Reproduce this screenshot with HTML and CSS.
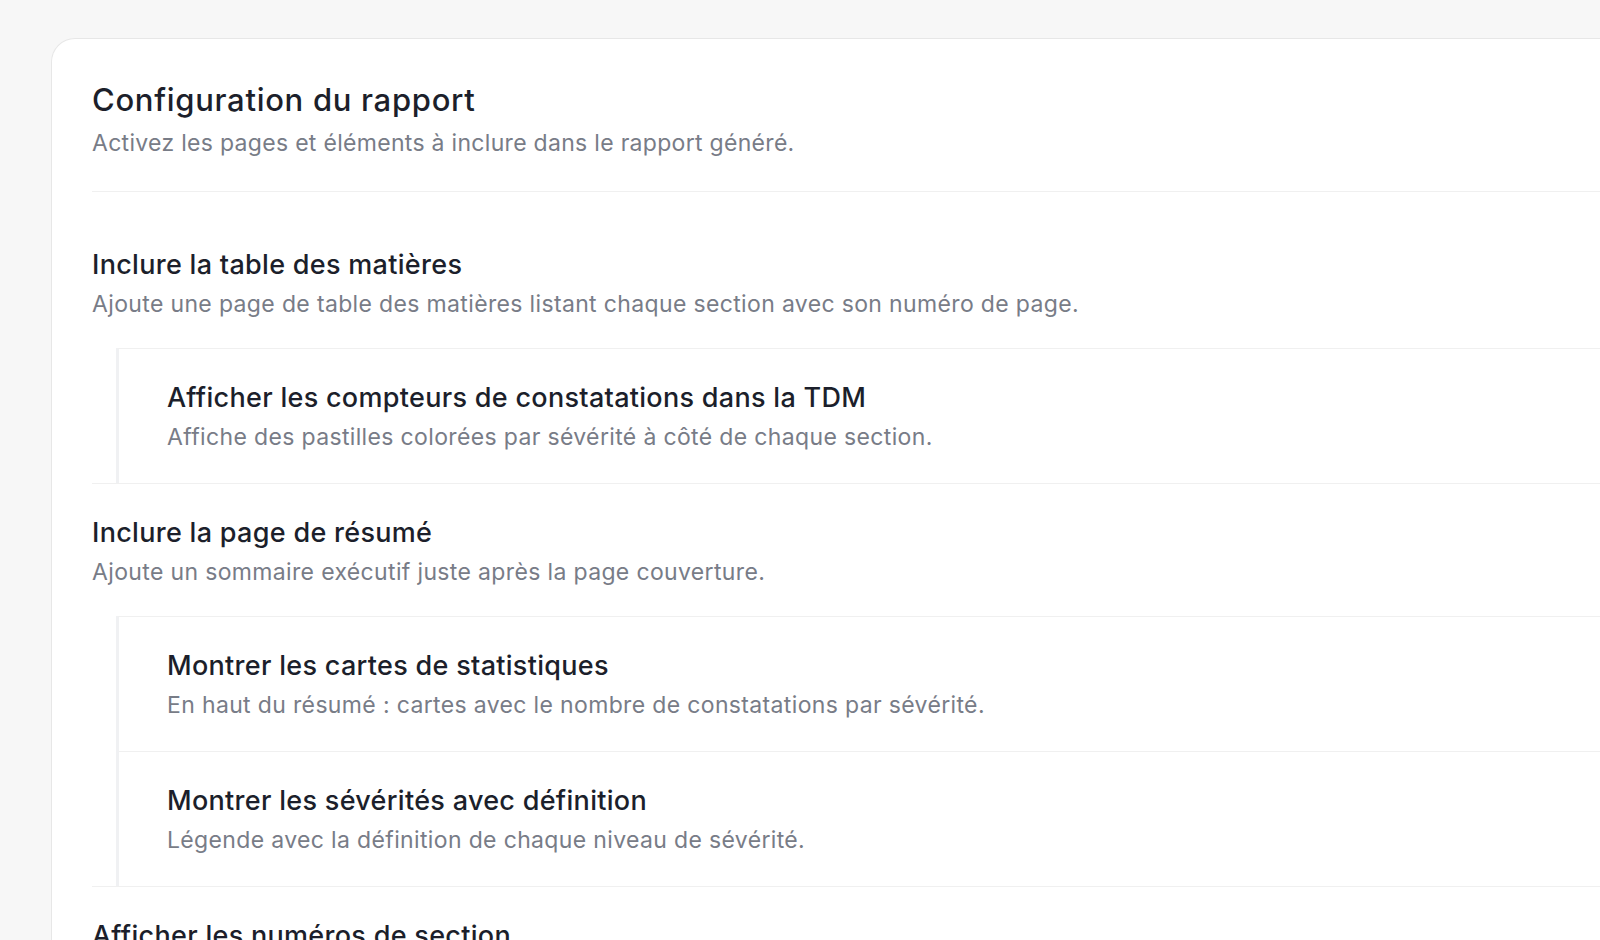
FILE: index.html
```html
<!DOCTYPE html>
<html lang="fr">
<head>
<meta charset="utf-8">
<title>Configuration du rapport</title>
<link rel="stylesheet" href="styles.css">
</head>
<body>
<main class="page">
  <section class="card">
    <header class="card-head">
      <h1 class="card-title">Configuration du rapport</h1>
      <p class="card-sub">Activez les pages et éléments à inclure dans le rapport généré.</p>
    </header>
    <div class="options">
      <div class="opt">
        <div class="opt-text">
          <div class="opt-title">Inclure la table des matières</div>
          <div class="opt-desc">Ajoute une page de table des matières listant chaque section avec son numéro de page.</div>
        </div>
        <div class="subs">
          <div class="sub">
            <div class="opt-title">Afficher les compteurs de constatations dans la TDM</div>
            <div class="opt-desc">Affiche des pastilles colorées par sévérité à côté de chaque section.</div>
          </div>
        </div>
      </div>
      <div class="opt">
        <div class="opt-text">
          <div class="opt-title">Inclure la page de résumé</div>
          <div class="opt-desc">Ajoute un sommaire exécutif juste après la page couverture.</div>
        </div>
        <div class="subs">
          <div class="sub">
            <div class="opt-title">Montrer les cartes de statistiques</div>
            <div class="opt-desc">En haut du résumé : cartes avec le nombre de constatations par sévérité.</div>
          </div>
          <div class="sub">
            <div class="opt-title">Montrer les sévérités avec définition</div>
            <div class="opt-desc">Légende avec la définition de chaque niveau de sévérité.</div>
          </div>
        </div>
      </div>
      <div class="opt">
        <div class="opt-text">
          <div class="opt-title">Afficher les numéros de section</div>
          <div class="opt-desc">Préfixe chaque titre de section par son numéro.</div>
        </div>
      </div>
    </div>
  </section>
</main>
</body>
</html>
```
FILE: styles.css
```css
* { box-sizing: border-box; }
html, body { margin: 0; padding: 0; }
body {
  background: #f7f7f7;
  font-family: "Inter", "Liberation Sans", sans-serif;
  color: #1c1f2b;
  height: 940px;
  overflow: hidden;
}
.page {
  padding: 38px 0 0 51px;
}
.card {
  background: #ffffff;
  border: 1px solid #e7e7e7;
  border-right: none;
  border-radius: 24px 0 0 0;
  padding: 0 0 0 40px;
  min-height: 1000px;
}
.card-head {
  padding: 39px 0 33px;
  border-bottom: 1px solid #f0f0f0;
}
.card-title {
  margin: 0;
  font-size: 31px;
  line-height: 44px;
  font-weight: 500;
  letter-spacing: 0.7px;
}
.card-sub {
  margin: 6px 0 0;
  font-size: 23px;
  line-height: 30px;
  color: #787c87;
  letter-spacing: 0.3px;
}
.options {
  padding-top: 24px;
}
.opt {
  border-bottom: 1px solid #f0f0f0;
}
.opt-text {
  padding: 32px 0 29px;
  display: flex;
  flex-direction: column;
  gap: 7px;
}
.opt-title {
  font-size: 27px;
  line-height: 34px;
  font-weight: 500;
  letter-spacing: 0.3px;
}
.opt-desc {
  font-size: 23px;
  line-height: 30px;
  color: #787c87;
  letter-spacing: 0.35px;
}
.subs {
  margin-left: 24px;
  border-left: 3px solid #f0f1f3;
  border-top: 1px solid #f0f0f0;
}
.sub {
  padding: 32px 0 31px 48px;
  display: flex;
  flex-direction: column;
  gap: 7px;
}
.sub + .sub {
  border-top: 1px solid #f0f0f0;
}
```
